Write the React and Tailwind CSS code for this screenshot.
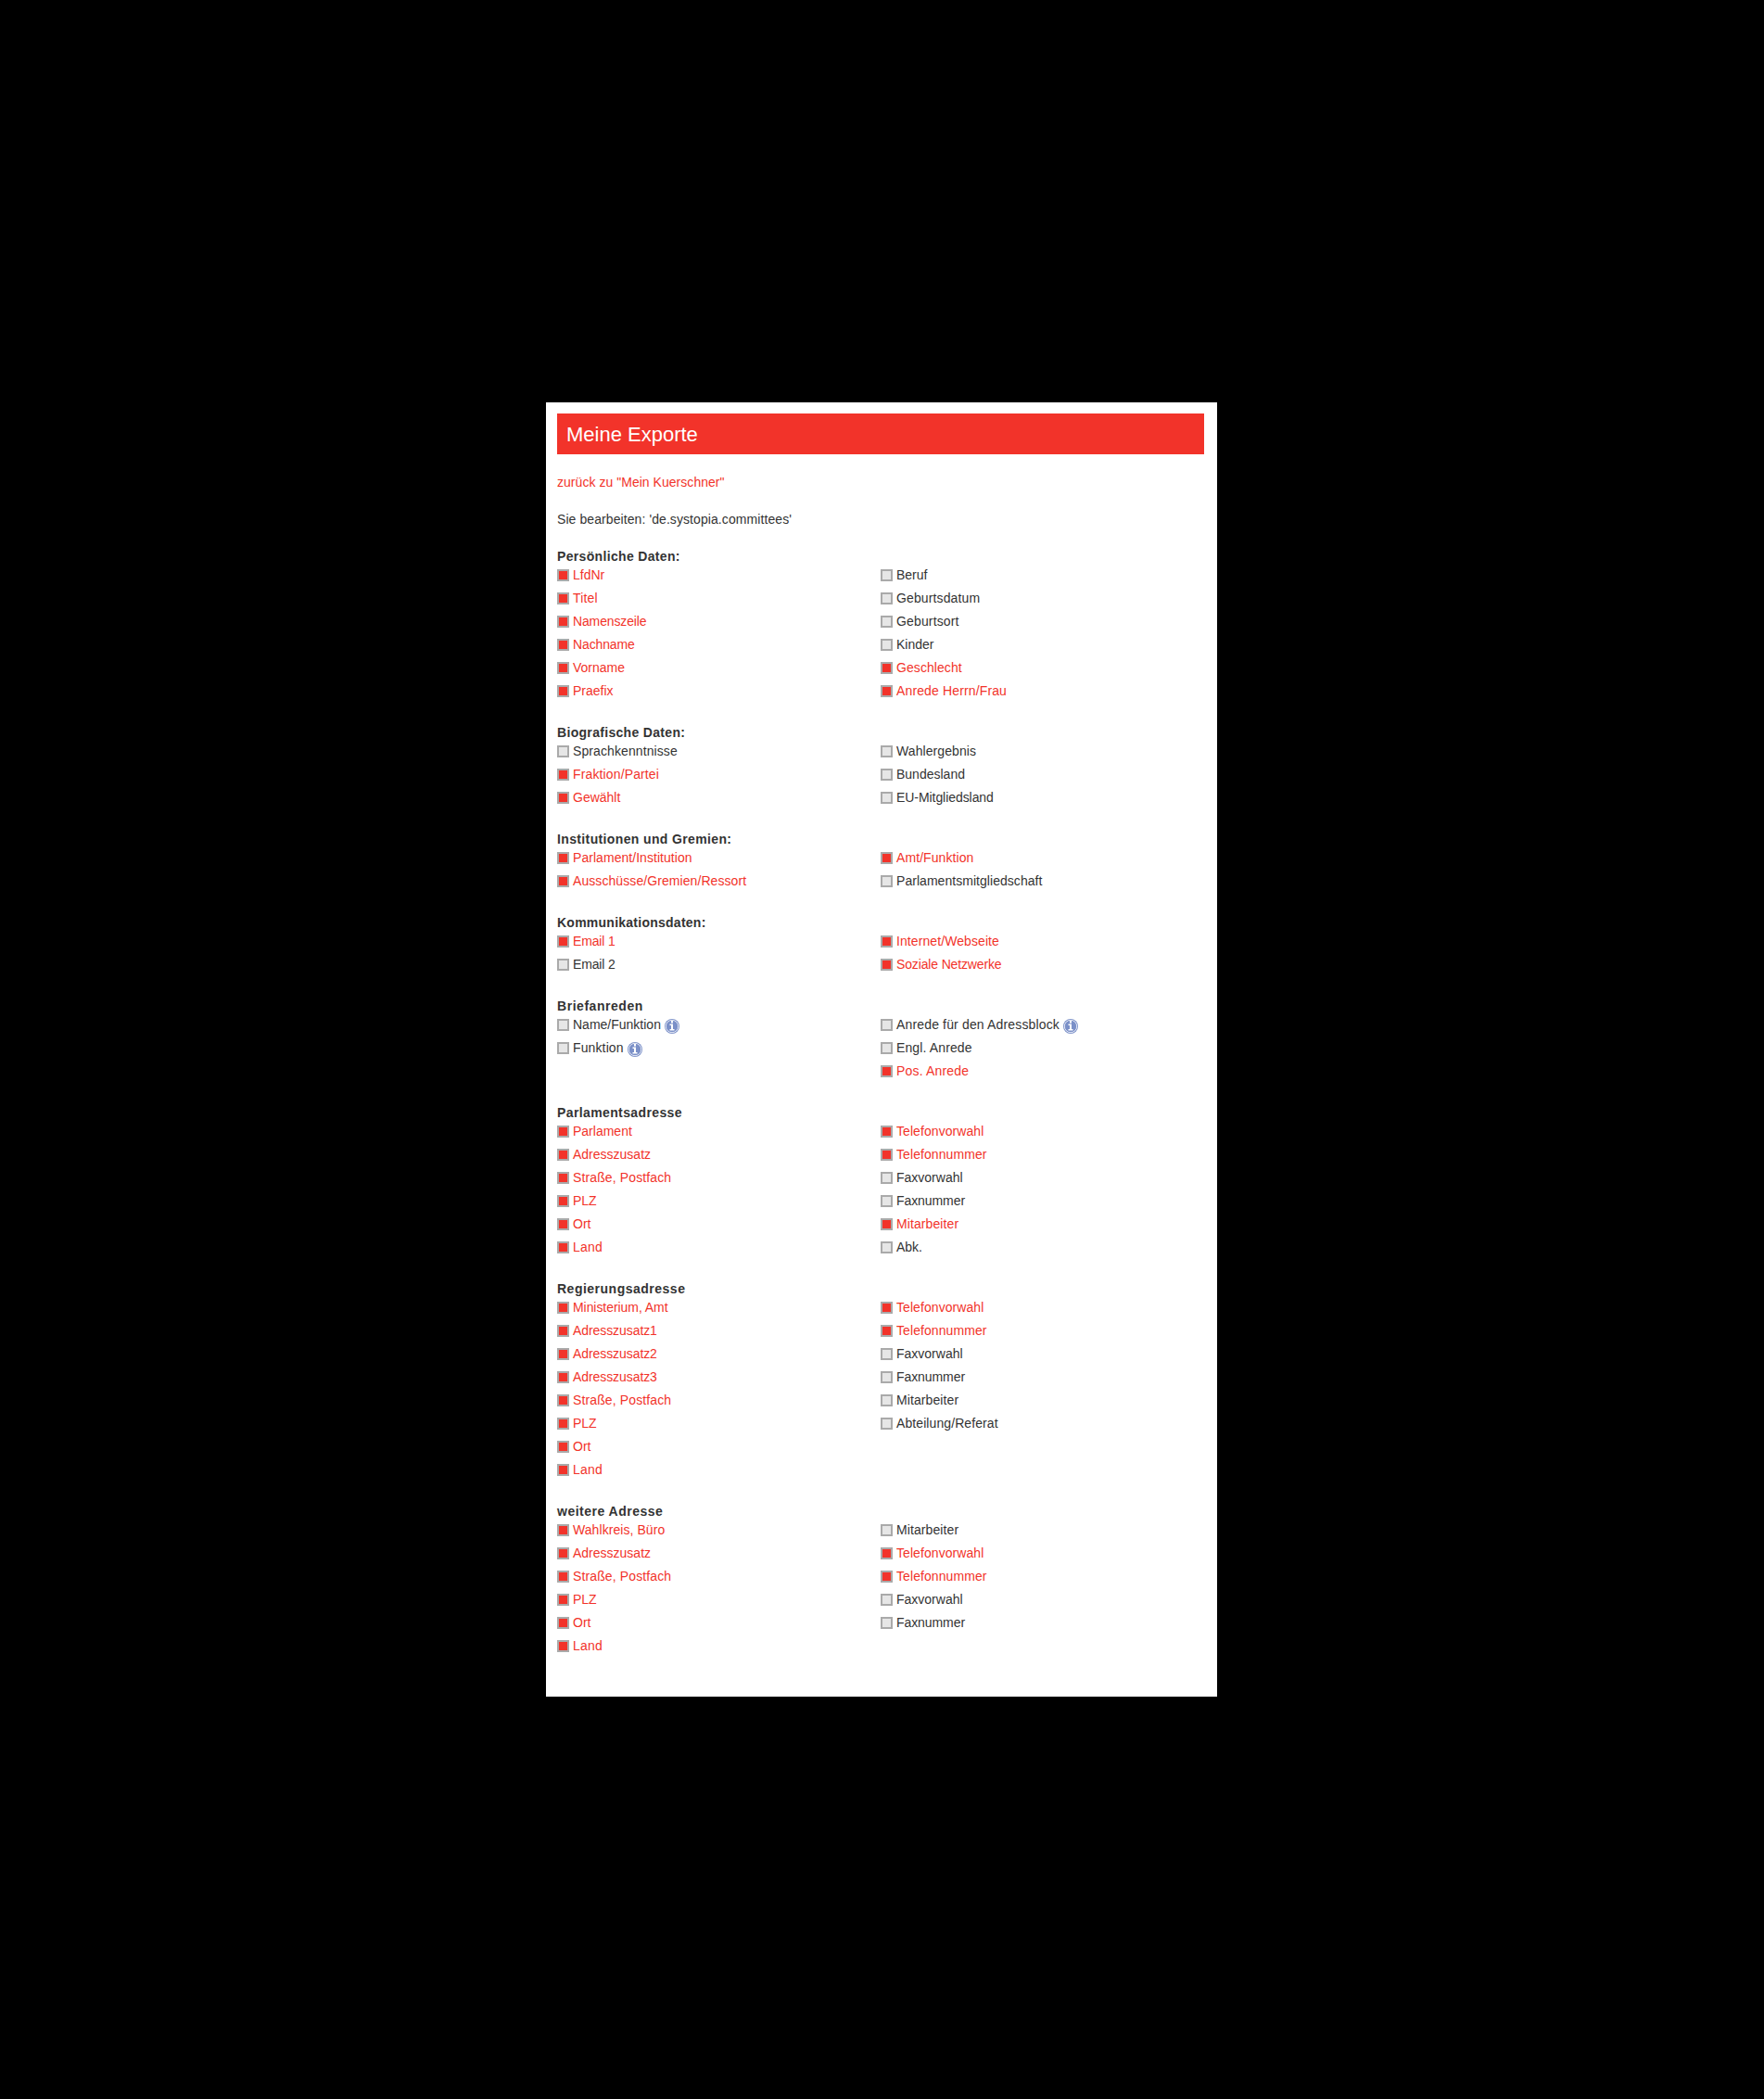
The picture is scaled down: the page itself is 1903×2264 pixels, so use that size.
const groups = [
  {
    title: 'Persönliche Daten:',
    left: ['*LfdNr', '*Titel', '*Namenszeile', '*Nachname', '*Vorname', '*Praefix'],
    right: ['Beruf', 'Geburtsdatum', 'Geburtsort', 'Kinder', '*Geschlecht', '*Anrede Herrn/Frau'],
  },
  {
    title: 'Biografische Daten:',
    left: ['Sprachkenntnisse', '*Fraktion/Partei', '*Gewählt'],
    right: ['Wahlergebnis', 'Bundesland', 'EU-Mitgliedsland'],
  },
  {
    title: 'Institutionen und Gremien:',
    left: ['*Parlament/Institution', '*Ausschüsse/Gremien/Ressort'],
    right: ['*Amt/Funktion', 'Parlamentsmitgliedschaft'],
  },
  {
    title: 'Kommunikationsdaten:',
    left: ['*Email 1', 'Email 2'],
    right: ['*Internet/Webseite', '*Soziale Netzwerke'],
  },
  {
    title: 'Briefanreden',
    left: ['Name/Funktion?', 'Funktion?'],
    right: ['Anrede für den Adressblock?', 'Engl. Anrede', '*Pos. Anrede'],
  },
  {
    title: 'Parlamentsadresse',
    left: ['*Parlament', '*Adresszusatz', '*Straße, Postfach', '*PLZ', '*Ort', '*Land'],
    right: ['*Telefonvorwahl', '*Telefonnummer', 'Faxvorwahl', 'Faxnummer', '*Mitarbeiter', 'Abk.'],
  },
  {
    title: 'Regierungsadresse',
    left: ['*Ministerium, Amt', '*Adresszusatz1', '*Adresszusatz2', '*Adresszusatz3', '*Straße, Postfach', '*PLZ', '*Ort', '*Land'],
    right: ['*Telefonvorwahl', '*Telefonnummer', 'Faxvorwahl', 'Faxnummer', 'Mitarbeiter', 'Abteilung/Referat'],
  },
  {
    title: 'weitere Adresse',
    left: ['*Wahlkreis, Büro', '*Adresszusatz', '*Straße, Postfach', '*PLZ', '*Ort', '*Land'],
    right: ['Mitarbeiter', '*Telefonvorwahl', '*Telefonnummer', 'Faxvorwahl', 'Faxnummer'],
  },
];

// Extra width in pixels that is spread over a text's letters.
const extraWidth = {
  'Persönliche Daten:': 6,
  'Biografische Daten:': 6,
  'Institutionen und Gremien:': 9.5,
  'Kommunikationsdaten:': 5,
  Briefanreden: 6.5,
  Parlamentsadresse: 6.5,
  Regierungsadresse: 8.5,
  'weitere Adresse': 7.5,
  'zurück zu "Mein Kuerschner"': 1,
  "Sie bearbeiten: 'de.systopia.committees'": 3.3,
  Titel: 0.7,
  Namenszeile: -1.5,
  Nachname: -1,
  Geburtsdatum: 1.5,
  Geburtsort: 1.5,
  Geschlecht: 0.7,
  'Anrede Herrn/Frau': 2.3,
  Sprachkenntnisse: 1.5,
  'Fraktion/Partei': 2,
  Wahlergebnis: 1,
  'EU-Mitgliedsland': -1,
  'Parlament/Institution': 1,
  'Ausschüsse/Gremien/Ressort': 2,
  'Amt/Funktion': 1,
  Parlamentsmitgliedschaft: 1,
  'Email 1': -1,
  'Email 2': -1,
  'Internet/Webseite': 1.5,
  'Soziale Netzwerke': -2.5,
  Funktion: 1,
  'Anrede für den Adressblock': 4,
  'Engl. Anrede': 1.5,
  'Pos. Anrede': 2,
  Telefonvorwahl: 1,
  Telefonnummer: 1,
  'Straße, Postfach': 2,
  Faxnummer: -0.7,
  Mitarbeiter: 1,
  Land: 0.7,
  'Wahlkreis, Büro': 1,
  Adresszusatz1: -1,
  Adresszusatz2: -1,
  Adresszusatz3: -1,
  'Abteilung/Referat': 1.5,
  'Ministerium, Amt': -1,
};

function Fitted({ children }) {
  const spacing = (extraWidth[children] || 0) / children.length;
  return (
    <span className="whitespace-nowrap" style={{ letterSpacing: `${spacing}px` }}>
      {children}
    </span>
  );
}

function InfoIcon() {
  return (
    <svg className="mt-1 ml-[4px] size-4 shrink-0" viewBox="0 0 16 16">
      <circle cx="8" cy="8" r="8" fill="#7b90c8" />
      <circle cx="8" cy="8" r="6.7" fill="none" stroke="#ffffff" strokeWidth="0.8" />
      <path d="M7 2h2v2.5H7zM5.5 5.5H9V11h1.5v1.5h-5V11H7V7H5.5z" fill="#fff" />
    </svg>
  );
}

// A leading "*" marks a selected field, a trailing "?" one with an info icon.
function Field({ spec }) {
  const checked = spec.startsWith('*');
  const info = spec.endsWith('?');
  const label = spec.replace(/^\*|\?$/g, '');
  return (
    <label className={checked ? 'flex h-[25px] text-[#f2332a]' : 'flex h-[25px]'}>
      <span
        className={
          checked
            ? 'mt-1 mr-1 size-[13px] shrink-0 border-2 border-[#aaaaaa] bg-[#f2332a]'
            : 'mt-1 mr-1 size-[13px] shrink-0 border-2 border-[#aaaaaa] bg-[#e6e6e6]'
        }
      />
      <Fitted>{label}</Fitted>
      {info && <InfoIcon />}
    </label>
  );
}

export default function App() {
  return (
    <div className="flex h-[2264px] w-full bg-black pt-[434px] pl-[589px] font-['Liberation_Sans',Arial,sans-serif] text-[14px] leading-5 text-[#333333]">
      <main className="h-[1396px] w-[724px] bg-white pt-3 pr-[14px] pl-3">
        <h1 className="mb-5 h-11 bg-[#f2332a] px-[10px] text-[22px] leading-[46px] text-white">Meine Exporte</h1>
        <a className="mb-5 block text-[#f2332a]"><Fitted>{'zurück zu "Mein Kuerschner"'}</Fitted></a>
        <p className="mb-5"><Fitted>{"Sie bearbeiten: 'de.systopia.committees'"}</Fitted></p>
        {groups.map((g) => (
          <section key={g.title} className="mb-5">
            <h2 className="font-bold"><Fitted>{g.title}</Fitted></h2>
            <div className="grid grid-cols-2">
              <div>{g.left.map((s) => <Field key={s} spec={s} />)}</div>
              <div>{g.right.map((s) => <Field key={s} spec={s} />)}</div>
            </div>
          </section>
        ))}
      </main>
    </div>
  );
}
